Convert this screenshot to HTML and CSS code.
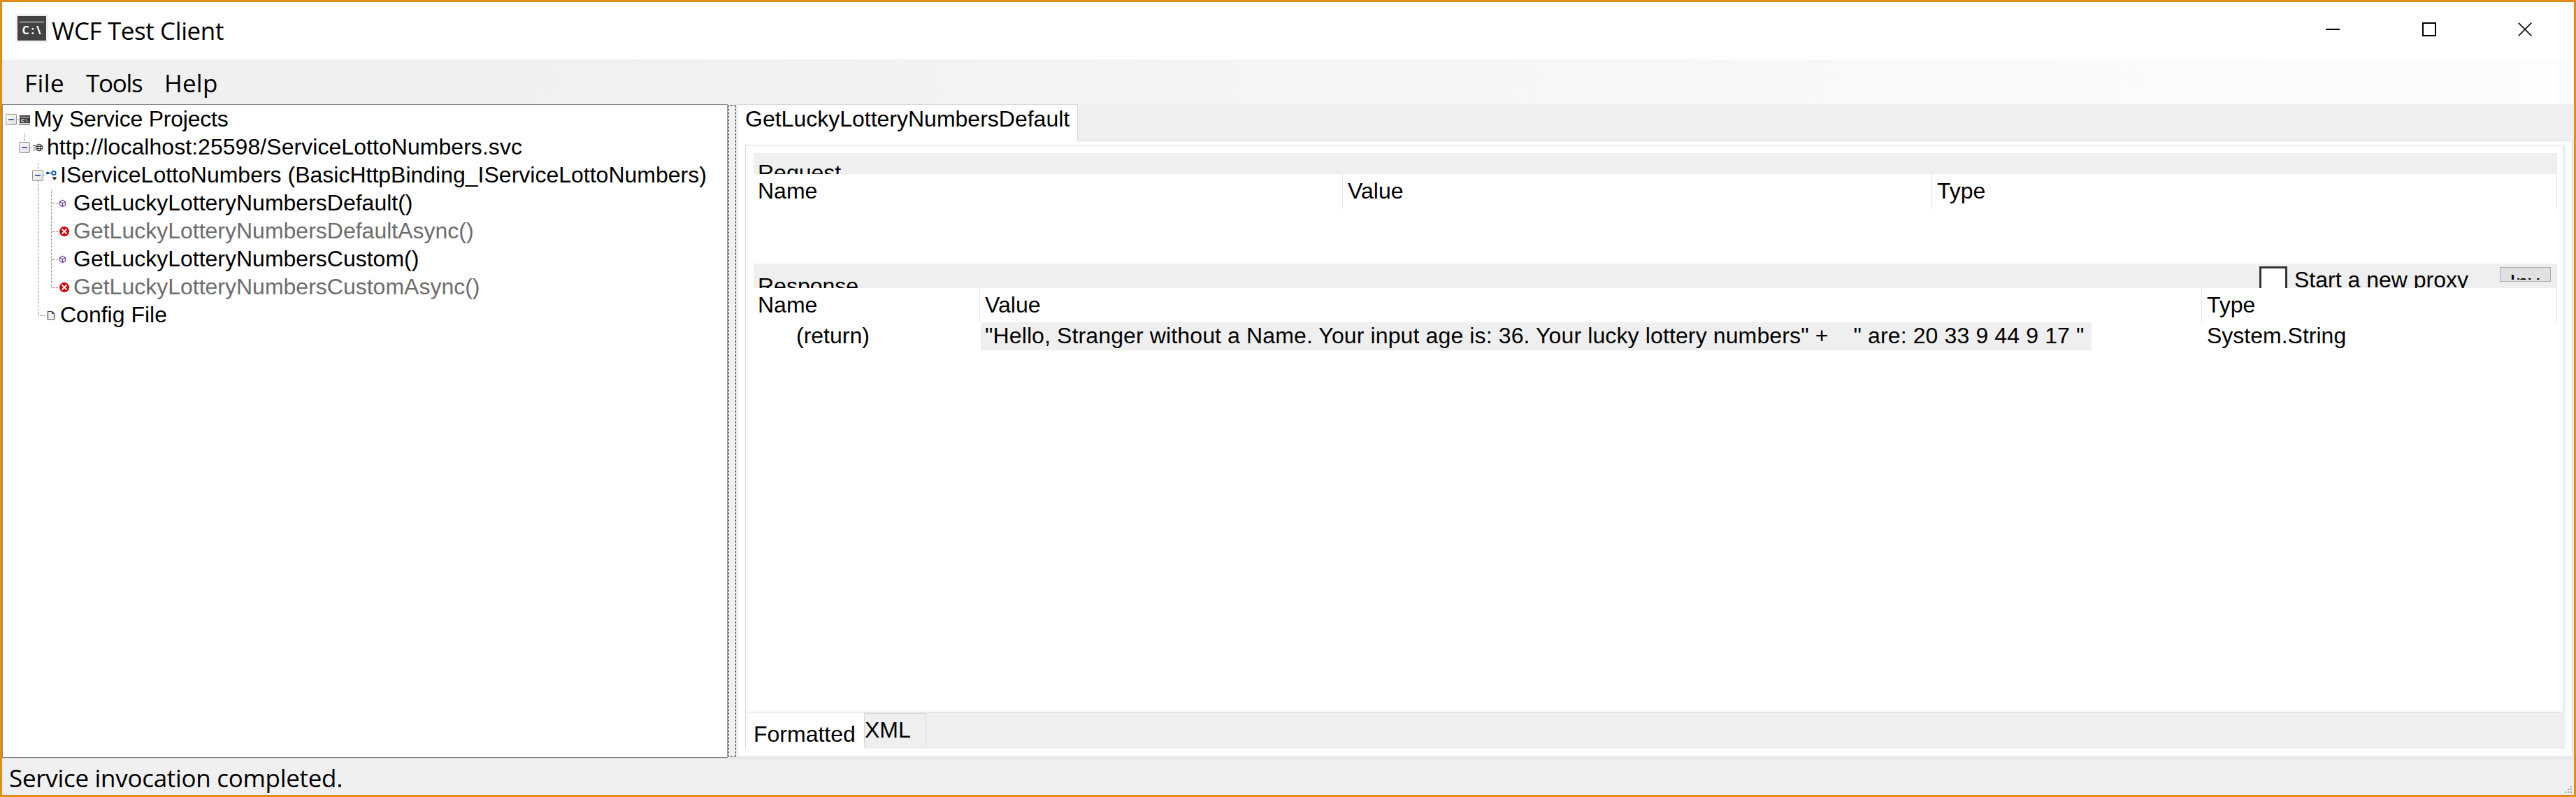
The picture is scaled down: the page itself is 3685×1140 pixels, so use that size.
FILE: index.html
```html
<!DOCTYPE html>
<html lang="en">
<head>
<meta charset="utf-8">
<title>WCF Test Client</title>
<link rel="stylesheet" href="styles.css">
</head>
<body>
<svg width="0" height="0" class="defs">
  <defs>
    <linearGradient id="box" x1="0" y1="0" x2="1" y2="1"><stop offset="0" stop-color="#fff"/><stop offset="1" stop-color="#dedede"/></linearGradient>
    <g id="minus"><rect x=".5" y=".5" width="15" height="15" rx="1" fill="url(#box)" stroke="#919191"/><rect x="4" y="7" width="8" height="2" fill="#4b63a7"/></g>
    <g id="cube" fill="none" stroke="#6b3fa0" stroke-width="1.2"><path d="M5 .8 9 3v4.6L5 10 1 7.600V3zM1 3.200 5 5.200 9 3.200M5 5.200V10"/></g>
    <g id="error"><circle cx="7" cy="7" r="7" fill="#d40000"/><path d="M3.500 3.500l7 7M10.500 3.500l-7 7" stroke="#fff" stroke-width="2"/></g>
  </defs>
</svg>
<div class="window">
  <header class="titlebar">
    <svg class="app-icon" width="47" height="41" viewBox="0 0 47 41"><rect width="47" height="41" fill="#f0f0f0"/><rect x="3" y="3" width="41" height="35" fill="#424242"/><rect x="6" y="11" width="35" height="1" fill="#fff"/><text x="9.500" y="29" class="prompt" textLength="27">C:\</text></svg>
    <h1 class="title"><span>WCF Test Client</span></h1>
    <div class="controls">
      <svg width="20" height="20"><path d="M0 10h20" stroke="#000" stroke-width="2"/></svg>
      <svg width="20" height="20"><path d="M1 1h18v18H1z" fill="none" stroke="#000" stroke-width="2"/></svg>
      <svg width="20" height="20"><path d="M.7.7l18.600 18.600M19.300.7L.7 19.300" stroke="#111" stroke-width="1.700"/></svg>
    </div>
  </header>
  <nav class="menubar"><span class="m-file">File</span><span class="m-tools">Tools</span><span class="m-help">Help</span></nav>
  <main class="main">
    <section class="tree">
      <div class="node root"><svg width="43" height="40"><use href="#minus" x="4" y="13"/><path class="dots" d="M20 21.500h4"/><rect x="24" y="15" width="15" height="11" fill="#3a3a3a"/><path d="M25 17.500h13" stroke="#fff"/><text x="26" y="24.500" class="prompt-sm" textLength="10">C:\</text><path d="M23 27.500h16" stroke="#000"/></svg><span>My Service Projects</span></div>
      <div class="node url"><svg width="62" height="40"><path class="dots" d="M31.500 1v12"/><use href="#minus" x="23" y="13"/><path class="dots" d="M39 21.500h4"/><path d="M43 18.500h4M44 21.500h2M43 24.500h4" stroke="#424242"/><g fill="none" stroke="#424242" stroke-width="1.200"><circle cx="52" cy="21" r="4.700"/><ellipse cx="52" cy="21" rx="2" ry="4.700"/><path d="M48 19.500h8M48 22.500h8"/></g></svg><span>http://localhost:25598/ServiceLottoNumbers.svc</span></div>
      <div class="node"><svg width="81" height="40"><path class="dots" d="M50.500 1v12M50.500 29v11"/><use href="#minus" x="42" y="13"/><path class="dots" d="M58 21.500h4"/><circle cx="64" cy="17.500" r="2" fill="#00539c"/><path d="M64 17.500h6" stroke="#00539c" stroke-width="1.500"/><circle cx="73" cy="17.500" r="2.700" fill="none" stroke="#00539c" stroke-width="1.700"/><path d="M71.500 23h2l.5.600.5-.600h2v2.500L74 28l-2.500-2.500z" fill="#424242"/></svg><span>IServiceLottoNumbers (BasicHttpBinding_IServiceLottoNumbers)</span></div>
      <div class="node"><svg width="100" height="40"><path class="dots" d="M50.500 0v40M69.500 1v39M70 21.500h10"/><use href="#cube" x="80.500" y="15.500"/></svg><span>GetLuckyLotteryNumbersDefault()</span></div>
      <div class="node off"><svg width="100" height="40"><path class="dots" d="M50.500 0v40M69.500 0v40M70 21.500h10"/><use href="#error" x="81" y="14"/></svg><span>GetLuckyLotteryNumbersDefaultAsync()</span></div>
      <div class="node"><svg width="100" height="40"><path class="dots" d="M50.500 0v40M69.500 0v40M70 21.500h10"/><use href="#cube" x="80.500" y="15.500"/></svg><span>GetLuckyLotteryNumbersCustom()</span></div>
      <div class="node off"><svg width="100" height="40"><path class="dots" d="M50.500 0v40M69.500 0v22M70 21.500h10"/><use href="#error" x="81" y="14"/></svg><span>GetLuckyLotteryNumbersCustomAsync()</span></div>
      <div class="node"><svg width="81" height="40"><path class="dots" d="M50.500 0v22M51 21.500h10"/><path d="M64.500 15.500h6l3 3v8.500h-9zM70.500 15.500v3h3" fill="#f4f4f4" stroke="#424242" stroke-width="1.200"/></svg><span>Config File</span></div>
    </section>
    <div class="splitter"></div>
    <section class="work">
      <div class="tabs"><div class="tab">GetLuckyLotteryNumbersDefault</div><div class="tabs-rest"></div></div>
      <div class="page">
        <div class="sheet">
          <div class="group request-bar"><span>Request</span></div>
          <div class="grid request"><div>Name</div><div>Value</div><div>Type</div></div>
          <div class="group response-bar"><span>Response</span><i class="check"></i><span class="proxy">Start a new proxy</span><div class="invoke"><span>Inv</span></div></div>
          <div class="grid response"><div>Name</div><div>Value</div><div>Type</div></div>
          <div class="row"><div class="ret">(return)</div><div class="val"><span>"Hello, Stranger without a Name. Your input age is: 36. Your lucky lottery numbers" + &nbsp;&nbsp; " are: 20 33 9 44 9 17 "</span></div><div class="typ">System.String</div></div>
        </div>
        <div class="bottom-tabs"><div class="formatted">Formatted</div><div class="xml">XML</div></div>
      </div>
    </section>
  </main>
  <footer class="status"><span>Service invocation completed.</span><svg width="10" height="10" fill="#a0a0a0"><path d="M8 0h2v2H8zM8 4h2v2H8zM4 4h2v2H4zM0 8h2v2H0zM4 8h2v2H4zM8 8h2v2H8z"/></svg></footer>
</div>
</body>
</html>
```
FILE: styles.css
```css
* { box-sizing: border-box; }
body { margin: 0; font: 32px/40px "Liberation Sans", Arial, sans-serif; color: #000; }
.defs { position: absolute; }
.window { width: 3685px; height: 1140px; border: 3px solid #e38c18; background: #f0f0f0; display: flex; flex-direction: column; overflow: hidden; white-space: nowrap; }
.window svg { display: block; flex: none; }

.titlebar { height: 82px; background: #fff; display: flex; align-items: flex-start; padding: 17px 60px 0 19px; }
.title { margin: 0 auto 0 5px; font: 35px/48px "Open Sans", "Noto Sans", sans-serif; letter-spacing: -0.4px; }
.controls { display: flex; gap: 117.500px; padding-top: 12px; }
.prompt { font: bold 16px "Open Sans", sans-serif; fill: #fff; }
.prompt-sm { font: bold 7px "Liberation Mono", monospace; fill: #fff; }

.menubar { height: 64px; display: flex; padding: 10px 0 0 32px; font: 35px/48px "Open Sans", "Noto Sans", sans-serif; background: linear-gradient(90deg, #f0f0f0 0 20%, #fdfdfd); }
.menubar span { flex: none; }
.m-file { width: 88px; letter-spacing: .4px; }
.m-tools { width: 112px; letter-spacing: -1.300px; }
.m-help { letter-spacing: .2px; }

.main { height: 935px; display: flex; }
.tree { width: 1038px; border: 1px solid #828790; background: #fff; }
.node { height: 40px; display: flex; }
.node span { padding-left: 1px; }
.root { letter-spacing: -.22px; }
.url { letter-spacing: .05px; }
.off { color: #6d6d6d; }
.dots { fill: none; stroke: #777; stroke-width: 1; stroke-dasharray: 1 1; }
.splitter { width: 11px; height: 933px; margin: 1px 1px 0 1px; border: 1px dotted #000; }

.work { width: 2626px; height: 934px; display: flex; flex-direction: column; }
.tabs { height: 53px; display: flex; }
.tab { width: 488px; background: #fff; border: 1px solid #d9d9d9; border-bottom: 0; padding-left: 11px; }
.tabs-rest { flex: 1; border-bottom: 1px solid #d9d9d9; }
.page { flex: 1; background: #fff; border: 1px solid #d9d9d9; border-top: 0; padding: 5px 9px 10px 11px; display: flex; flex-direction: column; }
.sheet { height: 812px; width: 2602px; border: 1px solid #d9d9d9; box-shadow: 2px 0 #f0f0f0; padding: 11px 9px 0 11px; }
.group { background: #efefef; display: flex; overflow: hidden; padding-left: 6px; }
.request-bar { height: 30px; padding-top: 8px; }
.response-bar { height: 35px; padding-top: 12px; }
.grid { display: grid; height: 50px; line-height: 40px; border-right: 1px solid #e5e5e5; }
.grid div { padding: 4px 0 0 7px; }
.grid div:first-child { padding-left: 6px; }
.grid div + div { border-left: 1px solid #e5e5e5; }
.request { grid-template-columns: 842px 843px 1fr; margin-bottom: 78px; }
.response { grid-template-columns: 323px 1748px 1fr; height: 49px; }
.check { width: 40px; height: 40px; flex: none; margin: -8px 10px 0 auto; border: 3px solid #333; background: #fff; }
.proxy { width: 294px; margin-top: -9px; }
.invoke { width: 73px; height: 21px; margin: -7px 9px 0 0; border: 1px solid #adadad; background: #e1e1e1; overflow: hidden; padding: 1px 0 0 13px; }
.invoke span { display: block; height: 16px; overflow: hidden; line-height: 40px; }
.row { height: 40px; display: flex; line-height: 38px; }
.ret { width: 325px; padding-left: 61px; }
.val { width: 1589px; background: #efefef; padding-left: 6px; letter-spacing: .125px; }
.typ { padding-left: 165px; }
.bottom-tabs { height: 52px; width: 2604px; background: #efefef; display: flex; }
.formatted { width: 170px; height: 52px; background: #fff; border-left: 1px solid #d9d9d9; padding: 11px 0 0 11px; }
.xml { width: 89px; height: 48px; margin-top: 1px; border: 1px solid #d9d9d9; border-bottom: 0; padding-top: 3px; }

.status { height: 53px; border-top: 1px solid #d7d7d7; display: flex; justify-content: space-between; padding: 4px 3px 0 10px; font: 35px/48px "Open Sans", "Noto Sans", sans-serif; letter-spacing: -.3px; }
.status svg { margin-top: 35px; }
```
